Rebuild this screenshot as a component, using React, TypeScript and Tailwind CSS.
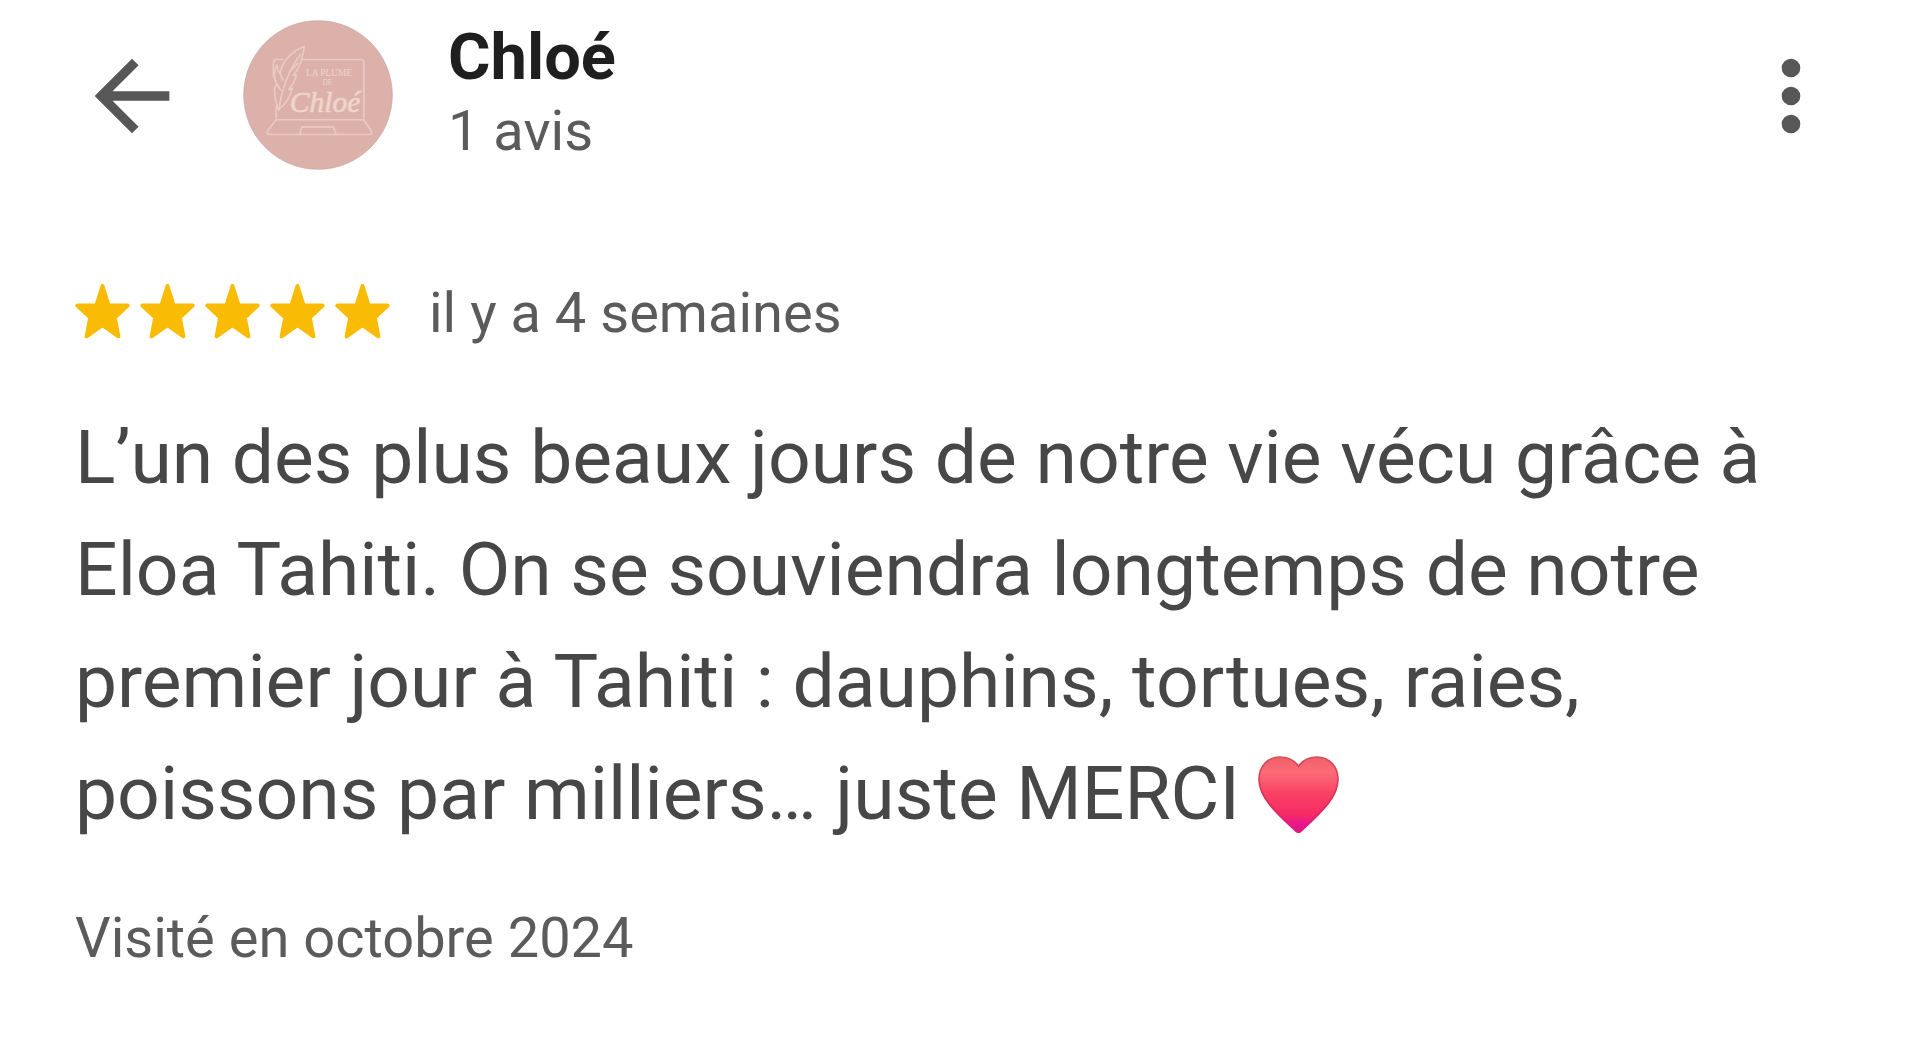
import React from 'react';

interface Review {
  author: string;
  count: string;
  rating: number;
  date: string;
  text: string;
  visited: string;
}

const review: Review = {
  author: 'Chloé',
  count: '1 avis',
  rating: 5,
  date: 'il y a 4 semaines',
  text: 'L’un des plus beaux jours de notre vie vécu grâce à Eloa Tahiti. On se souviendra longtemps de notre premier jour à Tahiti : dauphins, tortues, raies, poissons par milliers… juste MERCI',
  visited: 'Visité en octobre 2024'
};

const BackIcon: React.FC = () => (
  <svg viewBox="0 0 24 24" className="size-28" fill="currentColor" aria-hidden="true">
    <path d="M20 11H7.83l5.59-5.59L12 4l-8 8 8 8 1.41-1.41L7.83 13H20v-2z" />
  </svg>
);

const MoreIcon: React.FC = () => (
  <svg viewBox="0 0 24 24" className="size-28" fill="currentColor" aria-hidden="true">
    <circle cx="12" cy="6" r="2" />
    <circle cx="12" cy="12" r="2" />
    <circle cx="12" cy="18" r="2" />
  </svg>
);

const Star: React.FC = () => (
  <svg viewBox="0 0 166 166" className="size-[55px]" aria-hidden="true">
    <path
      d="M83 6 L101 64 L159 65 L120 101 L131 158 L83 124 L35 158 L46 101 L7 65 L65 64 Z"
      fill="#fabb05"
      stroke="#fabb05"
      strokeWidth="12"
      strokeLinejoin="round"
    />
  </svg>
);

const Heart: React.FC = () => (
  <svg
    viewBox="0 0 244 232"
    className="mb-[10px] inline-block h-[77px] w-[81px] align-middle"
    role="img"
    aria-label="cœur"
  >
    <defs>
      <linearGradient id="heart-fill" x1="0" y1="0" x2="0" y2="1">
        <stop offset="0" stopColor="#ee6068" />
        <stop offset="0.2" stopColor="#fc6b76" />
        <stop offset="0.5" stopColor="#fa4063" />
        <stop offset="0.75" stopColor="#f62c64" />
        <stop offset="0.9" stopColor="#ea1490" />
        <stop offset="1" stopColor="#e0187c" />
      </linearGradient>
      <linearGradient id="heart-edge" x1="0" y1="0" x2="0" y2="1">
        <stop offset="0" stopColor="#d0505a" />
        <stop offset="0.6" stopColor="#dd2c55" />
        <stop offset="1" stopColor="#e0187c" />
      </linearGradient>
    </defs>
    <path
      d="M122 31 C109 12 90 3 66 3 C29 3 3 32 3 70 C3 126 56 172 114 226 Q122 233 130 226 C188 172 241 126 241 70 C241 32 215 3 178 3 C154 3 135 12 122 31 Z"
      fill="url(#heart-fill)"
      stroke="url(#heart-edge)"
      strokeWidth="5"
    />
  </svg>
);

const Avatar: React.FC = () => (
  <svg viewBox="41 31 448 448" className="size-[150px]" role="img" aria-label="La plume de Chloé">
    <circle cx="265" cy="255" r="222" fill="#dcb1aa" stroke="#c9a7a1" strokeWidth="2" />
    <g fill="none" stroke="#ebcbc1" strokeWidth="5" strokeLinecap="round" strokeLinejoin="round">
      {/* laptop */}
      <path d="M218 149 H392 Q402 149 402 159 V329" />
      <path d="M160 149 H141 Q132 149 132 160 V200" />
      <path d="M140 290 V329 H402 L425 364 Q427 373 417 373 H121 Q110 373 113 364 L140 329" />
      <path d="M211 370 L217 350 H311 L318 370" />
      {/* feather */}
      <path d="M224 110 C180 126 158 160 151 190 C143 182 144 170 143 165 C131 186 133 206 142 222 C132 232 133 262 147 298 C164 286 180 268 188 236 L178 238 C192 222 198 208 200 196 L192 196 C212 172 220 142 224 110 Z" />
      <path d="M212 134 C180 178 158 228 148 300" />
      <path d="M151 190 L160 210 M142 222 L153 240 M205 160 L184 182" />
    </g>
    <g fill="#efd5ca" textAnchor="middle">
      <text x="298" y="199" className="font-['Liberation_Serif',serif] text-[28px]">LA PLUME</text>
      <text x="293" y="226" className="font-['Liberation_Serif',serif] text-[22px]">DE</text>
      <text x="286" y="306" className="font-['Liberation_Serif',serif] text-[88px] italic" stroke="#efd5ca" strokeWidth="2">Chloé</text>
    </g>
  </svg>
);

const App: React.FC = () => {
  return (
    <main className="min-h-screen bg-white pt-5 pb-19 font-[Roboto,sans-serif] text-[#5b5b5b]">
      <header className="flex items-center pr-[73px] pl-[76px]">
        <button type="button" aria-label="Retour" className="pt-[2px] text-[#575757]">
          <BackIcon />
        </button>
        <div className="ml-[55px] shrink-0">
          <Avatar />
        </div>
        <div className="ml-[55px] grow">
          <h1 className="text-[65px] leading-[72px] font-bold text-[#1f1f1f]">{review.author}</h1>
          <p className="text-[56px] leading-[76px]">{review.count}</p>
        </div>
        <button type="button" aria-label="Plus d’options" className="pt-[2px] text-[#575757]">
          <MoreIcon />
        </button>
      </header>

      <article className="mt-[107px] px-[75px]">
        <div className="flex items-center gap-[39px]">
          <div className="flex gap-[10px] pb-[3px]" role="img" aria-label="5 étoiles sur 5">
            {Array.from({ length: review.rating }, (_, i) => (
              <Star key={i} />
            ))}
          </div>
          <p className="text-[56px] leading-[72px]">{review.date}</p>
        </div>
        <p className="mt-[52px] text-[75px] leading-[112px] text-[#474747]">
          {review.text} <Heart />
        </p>
        <p className="mt-[53px] text-[56px] leading-[72px]">{review.visited}</p>
      </article>
    </main>
  );
};

export default App;
